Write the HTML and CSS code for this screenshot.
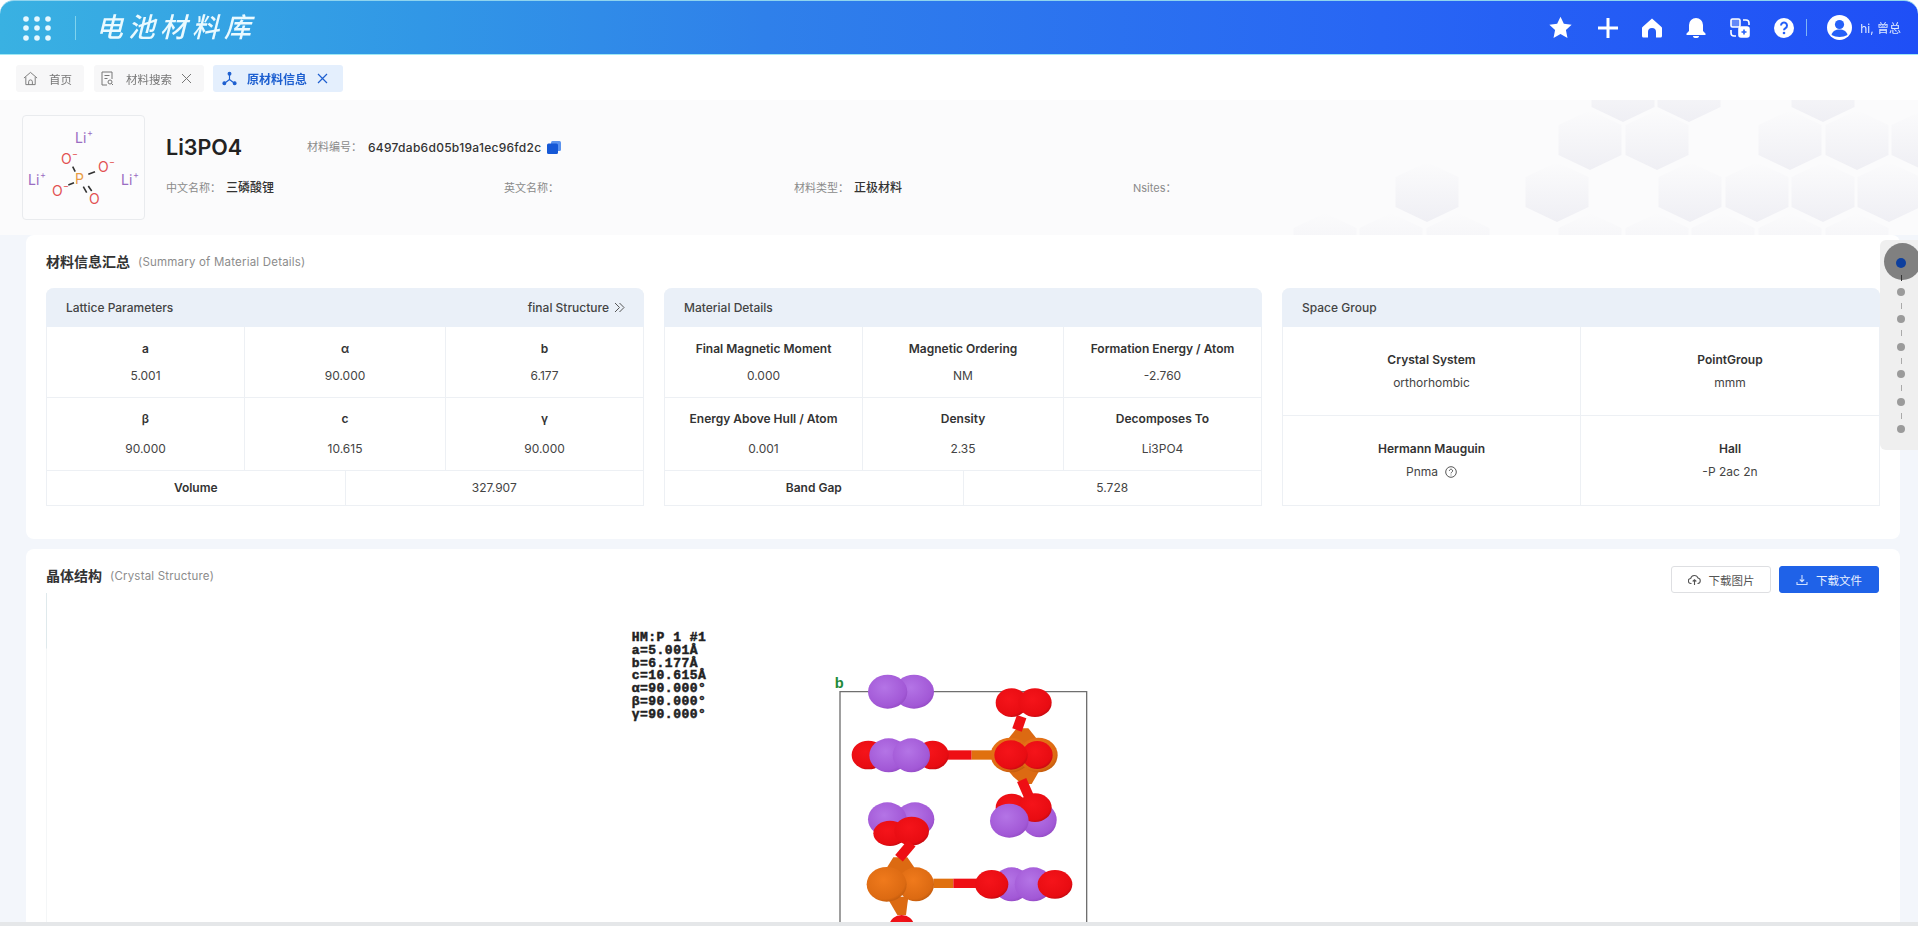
FILE: index.html
```html
<!DOCTYPE html>
<html lang="zh-CN">
<head>
<meta charset="utf-8">
<title>电池材料库</title>
<link rel="stylesheet" href="styles.css">
</head>
<body>
<div class="app">
  <header class="topbar">
    <div class="brand">
      <svg class="grid-icon" width="30" height="26" viewBox="0 0 30 26"><g fill="#e6f8ff"><circle cx="4" cy="4" r="2.800"/><circle cx="15" cy="4" r="2.800"/><circle cx="26" cy="4" r="2.800"/><circle cx="4" cy="13" r="2.800"/><circle cx="15" cy="13" r="2.800"/><circle cx="26" cy="13" r="2.800"/><circle cx="4" cy="23" r="2.800"/><circle cx="15" cy="23" r="2.800"/><circle cx="26" cy="23" r="2.800"/></g></svg>
      <span class="brand-rule"></span>
      <span class="brand-name">电池材料库</span>
    </div>
    <div class="tools">
      <svg class="tool tool-star" width="25" height="25" viewBox="0 0 24 24"><path fill="#fff" d="M12 1.600l3.200 6.900 7.500.9-5.500 5.100 1.500 7.500L12 18.200l-6.700 3.800 1.500-7.500L1.300 9.400l7.500-.9z"/></svg>
      <svg class="tool" width="22" height="22" viewBox="0 0 22 22"><path fill="#fff" d="M9.500 1h3v8.500h8.500v3h-8.500V21h-3v-8.500H1v-3h8.500z"/></svg>
      <svg class="tool" width="22" height="22" viewBox="0 0 22 22"><path fill="#fff" d="M11 1.500l9.500 8.500c.4.400.5.800.5 1.300V19a1.500 1.500 0 0 1-1.500 1.500H15v-5.500a4 4 0 0 0-8 0v5.500H2.500A1.500 1.500 0 0 1 1 19v-7.700c0-.5.100-.9.500-1.300z"/></svg>
      <svg class="tool" width="22" height="22" viewBox="0 0 22 22"><path fill="#fff" d="M11 1a7 7 0 0 1 7 7v6l2.500 2.500V18h-19v-1.500L4 14V8a7 7 0 0 1 7-7zM8 19h6a3 2 0 0 1-6 0z"/></svg>
      <svg class="tool" width="22" height="22" viewBox="0 0 22 22" fill="none" stroke="#fff" stroke-width="1.600"><rect x="2" y="2" width="9" height="8" rx="1.500" fill="#fff" fill-opacity=".3"/><path d="M14 3h3a3 3 0 0 1 3 3v2M2 13v3a3 3 0 0 0 3 3h2"/><rect x="10" y="10" width="10" height="10" rx="2" fill="#fff"/><path d="M15 12.500v5M12.500 15h5" stroke="#2560f8"/></svg>
      <svg class="tool tool-last" width="22" height="22" viewBox="0 0 22 22"><circle cx="11" cy="11" r="10" fill="#fff"/><path fill="none" stroke="#2560f8" stroke-width="2" d="M8 8.500a3 3 0 1 1 4.500 2.600c-1 .6-1.500 1.100-1.500 2.200"/><circle cx="11" cy="16" r="1.300" fill="#2560f8"/></svg>
      <span class="tool-rule"></span>
      <svg class="avatar" width="25" height="25" viewBox="0 0 25 25"><circle cx="12.500" cy="12.500" r="12.500" fill="#fff"/><circle cx="12.500" cy="9.500" r="4.600" fill="#2560f8"/><path fill="#2560f8" d="M4.500 20c1-4 4-5.500 8-5.500s7 1.500 8 5.500c-4.500 2.500-11.500 2.500-16 0z"/></svg>
      <span class="hello">hi, 曾总</span>
    </div>
  </header>

  <nav class="tabs">
    <a class="tab tab-home">
      <svg width="15" height="15" viewBox="0 0 16 16" fill="none" stroke="#777" stroke-width="1"><path d="M1 7.500L8 1.500l7 6M3 6.500V14.500h10V6.500M6 14.500v-3a2 2 0 0 1 4 0v3"/></svg>
      <span>首页</span>
    </a>
    <a class="tab tab-search">
      <svg width="13" height="15" viewBox="0 0 13 15" fill="none" stroke="#777" stroke-width="1"><path d="M6 14H1V1h10v7M3.500 4.500h5M3.500 7.500h3"/><circle cx="9" cy="11" r="2"/><path d="M10.500 12.500l1.500 1.500"/></svg>
      <span>材料搜索</span>
      <svg class="close" width="11" height="11" viewBox="0 0 11 11" stroke="#777" stroke-width="1"><path d="M1 1l9 9M10 1l-9 9"/></svg>
    </a>
    <a class="tab tab-active">
      <svg width="15" height="15" viewBox="0 0 16 16" fill="none" stroke="#1d5fd0" stroke-width="1.200"><circle cx="8" cy="3" r="1.500" fill="#1d5fd0"/><circle cx="2.500" cy="13" r="1.500" fill="#1d5fd0"/><circle cx="13.500" cy="13" r="1.500" fill="#1d5fd0"/><path d="M8 4v5M8 9l-4.500 3.500M8 9l4.500 3.500"/></svg>
      <span>原材料信息</span>
      <svg class="close" width="11" height="11" viewBox="0 0 11 11" stroke="#1d5fd0" stroke-width="1.200"><path d="M1 1l9 9M10 1l-9 9"/></svg>
    </a>
  </nav>

  <main class="main">
    <section class="hero">
      <svg class="hexes" width="640" height="135" viewBox="0 0 640 135">
        <defs>
          <linearGradient id="hexfill" x1="0" y1="0" x2="0" y2="1"><stop offset="0" stop-color="#fbfbfc"/><stop offset="1" stop-color="#efeff4"/></linearGradient>
          <polygon id="hx" points="0,-30 31.500,-15 31.500,15 0,30 -31.500,15 -31.500,-15" fill="url(#hexfill)"/>
        </defs>
        <use href="#hx" x="345" y="-8"/><use href="#hx" x="411" y="-8"/><use href="#hx" x="545" y="-8"/>
        <use href="#hx" x="312" y="40"/><use href="#hx" x="379" y="40"/><use href="#hx" x="512" y="40"/><use href="#hx" x="579" y="40"/><use href="#hx" x="645" y="40"/>
        <use href="#hx" x="149" y="92"/><use href="#hx" x="279" y="92"/><use href="#hx" x="412" y="92"/><use href="#hx" x="479" y="92"/><use href="#hx" x="545" y="92"/><use href="#hx" x="611" y="92"/>
        <use href="#hx" x="47" y="143"/><use href="#hx" x="113" y="143"/><use href="#hx" x="180" y="143"/><use href="#hx" x="312" y="143"/><use href="#hx" x="379" y="143"/><use href="#hx" x="445" y="143"/><use href="#hx" x="512" y="143"/><use href="#hx" x="579" y="143"/>
      </svg>
      <div class="thumb">
        <svg width="121" height="103" viewBox="0 0 121 103">
          <g stroke="#333" stroke-width="1.600"><path d="M49.700 50.700l2.500 5M65.300 58.300l6.700-2.600M45.300 69l5.700-2.300M60.300 70.700l3.400 6M65.300 70l3.400 5"/></g>
          <g class="mol-li"><text x="52" y="27">Li</text><text x="5" y="69">Li</text><text x="98" y="69">Li</text></g>
          <g class="mol-sup"><text x="64" y="20">+</text><text x="17" y="62">+</text><text x="110" y="62">+</text></g>
          <g class="mol-o"><text x="38" y="48">O</text><text x="75" y="56">O</text><text x="29" y="80">O</text><text x="66" y="88">O</text></g>
          <g class="mol-minus"><text x="49" y="41">−</text><text x="86" y="49">−</text><text x="40" y="73">−</text></g>
          <text class="mol-p" x="52" y="68">P</text>
        </svg>
      </div>
      <div class="hero-info">
        <div class="hero-top">
          <h1 class="formula">Li3PO4</h1>
          <span class="meta-label">材料编号：</span>
          <span class="hash">6497dab6d05b19a1ec96fd2c</span>
          <svg class="copy" width="14" height="13" viewBox="0 0 14 13"><rect x="4" y="0" width="10" height="10" rx="1.500" fill="#5b93ee"/><rect x="0" y="2.500" width="11" height="10.500" rx="1.500" fill="#1558d6"/></svg>
        </div>
        <div class="hero-meta">
          <div><span class="meta-label">中文名称：</span><span class="meta-value">三磷酸锂</span></div>
          <div><span class="meta-label">英文名称：</span></div>
          <div><span class="meta-label">材料类型：</span><span class="meta-value">正极材料</span></div>
          <div><span class="meta-label">Nsites：</span></div>
        </div>
      </div>
    </section>

    <section class="card summary">
      <div class="card-title"><strong>材料信息汇总</strong><span>(Summary of Material Details)</span></div>
      <div class="panels">
        <div class="panel">
          <div class="panel-head"><span>Lattice Parameters</span><span class="panel-link">final Structure
            <svg width="11" height="11" viewBox="0 0 11 11" fill="none" stroke="#555" stroke-width="1"><path d="M1 1l4.500 4.500L1 10M5.500 1L10 5.500 5.500 10"/></svg></span></div>
          <div class="sheet">
            <div class="cell third"><b>a</b><span>5.001</span></div>
            <div class="cell third"><b>α</b><span>90.000</span></div>
            <div class="cell third end"><b>b</b><span>6.177</span></div>
            <div class="cell third tall"><b>β</b><span>90.000</span></div>
            <div class="cell third tall"><b>c</b><span>10.615</span></div>
            <div class="cell third tall end"><b>γ</b><span>90.000</span></div>
            <div class="cell half"><b>Volume</b></div>
            <div class="cell half end"><span>327.907</span></div>
          </div>
        </div>
        <div class="panel">
          <div class="panel-head"><span>Material Details</span></div>
          <div class="sheet">
            <div class="cell third"><b>Final Magnetic Moment</b><span>0.000</span></div>
            <div class="cell third"><b>Magnetic Ordering</b><span>NM</span></div>
            <div class="cell third end"><b>Formation Energy / Atom</b><span>-2.760</span></div>
            <div class="cell third tall"><b>Energy Above Hull / Atom</b><span>0.001</span></div>
            <div class="cell third tall"><b>Density</b><span>2.35</span></div>
            <div class="cell third tall end"><b>Decomposes To</b><span>Li3PO4</span></div>
            <div class="cell half"><b>Band Gap</b></div>
            <div class="cell half end"><span>5.728</span></div>
          </div>
        </div>
        <div class="panel">
          <div class="panel-head"><span>Space Group</span></div>
          <div class="sheet sheet-two">
            <div class="cell wide"><b>Crystal System</b><span>orthorhombic</span></div>
            <div class="cell wide end"><b>PointGroup</b><span>mmm</span></div>
            <div class="cell wide last"><b>Hermann Mauguin</b><span class="with-icon">Pnma
              <svg width="12" height="12" viewBox="0 0 12 12" fill="none" stroke="#444" stroke-width=".9"><circle cx="6" cy="6" r="5.300"/><path d="M4.400 4.800a1.600 1.600 0 1 1 2.400 1.400c-.5.300-.8.600-.8 1.200M6 8.600v.8"/></svg></span></div>
            <div class="cell wide end last"><b>Hall</b><span>-P 2ac 2n</span></div>
          </div>
        </div>
      </div>
    </section>

    <section class="card crystal">
      <div class="crystal-head">
        <div class="card-title crystal-title"><strong>晶体结构</strong><span>(Crystal Structure)</span></div>
        <div class="actions">
          <button class="btn btn-plain" type="button">
            <svg width="13" height="12" viewBox="0 0 13 12" fill="none" stroke="#555" stroke-width="1.100"><path d="M3.500 9.500H3a2.500 2.500 0 0 1-.3-5A3.800 3.800 0 0 1 10 4a2.800 2.800 0 0 1 0 5.500h-.5M6.500 11V6M4.700 7.500l1.800-1.800 1.800 1.800"/></svg>
            下载图片</button>
          <button class="btn btn-primary" type="button">
            <svg width="12" height="12" viewBox="0 0 12 12" fill="none" stroke="#cfe0ff" stroke-width="1.100"><path d="M6 1v6.500M3.800 5.500L6 7.700l2.200-2.200M1 8v2.500h10V8"/></svg>
            下载文件</button>
        </div>
      </div>
      <div class="canvas">
        <span class="canvas-rule"></span>
        <svg class="structure" width="520" height="306" viewBox="0 0 1560 918">
          <defs>
            <radialGradient id="li" cx=".42" cy=".38" r=".68"><stop offset="0" stop-color="#b474e6"/><stop offset=".8" stop-color="#a258d6"/><stop offset="1" stop-color="#9048c0"/></radialGradient>
            <radialGradient id="ox" cx=".42" cy=".38" r=".68"><stop offset="0" stop-color="#f5141a"/><stop offset=".8" stop-color="#e80c12"/><stop offset="1" stop-color="#b80a10"/></radialGradient>
            <radialGradient id="ph" cx=".42" cy=".38" r=".68"><stop offset="0" stop-color="#f07a1c"/><stop offset=".8" stop-color="#dc6a12"/><stop offset="1" stop-color="#b8560c"/></radialGradient>
          </defs>
          <g class="jmol">
            <text x="95" y="62">HM:P 1 #1</text><text x="95" y="101">a=5.001Å</text><text x="95" y="140">b=6.177Å</text><text x="95" y="178">c=10.615Å</text><text x="95" y="216">α=90.000°</text><text x="95" y="254">β=90.000°</text><text x="95" y="293">γ=90.000°</text>
          </g>
          <text class="axis" x="704" y="204">b</text>
          <path d="M720 930V215H1460V930" fill="none" stroke="#6f6f6f" stroke-width="4"/>
          <polygon points="1250,325 1285,325 1345,400 1190,400" fill="#dc6a12"/>
          <polygon points="1215,440 1325,440 1295,492 1265,492 1240,470" fill="#dc6a12"/>
          <polygon points="880,712 922,712 962,770 850,760" fill="#dc6a12"/>
          <polygon points="860,830 925,830 918,885 892,885" fill="#dc6a12"/>
          <g fill="none">
            <path d="M1265 290l-14 40" stroke="#ee0f14" stroke-width="30"/>
            <path d="M1040 405h75" stroke="#ee0f14" stroke-width="28"/>
            <path d="M1115 405h70" stroke="#e0700f" stroke-width="28"/>
            <path d="M1265 480l22 50" stroke="#ee0f14" stroke-width="30"/>
            <path d="M1000 790h60" stroke="#e0700f" stroke-width="28"/>
            <path d="M1060 790h70" stroke="#ee0f14" stroke-width="28"/>
          </g>
          <ellipse cx="942" cy="215" rx="60" ry="51" fill="url(#li)"/><ellipse cx="863" cy="215" rx="59" ry="51" fill="url(#li)"/>
          <ellipse cx="1235" cy="248" rx="48" ry="43" fill="url(#ox)"/><ellipse cx="1305" cy="248" rx="50" ry="43" fill="url(#ox)"/>
          <ellipse cx="805" cy="405" rx="50" ry="43" fill="url(#ox)"/><ellipse cx="998" cy="405" rx="48" ry="43" fill="url(#ox)"/>
          <ellipse cx="866" cy="406" rx="58" ry="51" fill="url(#li)"/><ellipse cx="934" cy="406" rx="56" ry="51" fill="url(#li)"/>
          <ellipse cx="1232" cy="405" rx="60" ry="52" fill="url(#ph)"/><ellipse cx="1315" cy="405" rx="58" ry="52" fill="url(#ph)"/>
          <ellipse cx="1312" cy="405" rx="46" ry="42" fill="url(#ox)"/><ellipse cx="1233" cy="405" rx="50" ry="44" fill="url(#ox)"/>
          <ellipse cx="1318" cy="600" rx="52" ry="52" fill="url(#li)"/>
          <ellipse cx="1235" cy="563" rx="48" ry="42" fill="url(#ox)"/><ellipse cx="1305" cy="563" rx="50" ry="43" fill="url(#ox)"/>
          <ellipse cx="1228" cy="602" rx="58" ry="51" fill="url(#li)"/>
          <ellipse cx="945" cy="598" rx="58" ry="51" fill="url(#li)"/><ellipse cx="862" cy="598" rx="58" ry="51" fill="url(#li)"/>
          <ellipse cx="870" cy="640" rx="50" ry="38" fill="url(#ox)"/><ellipse cx="935" cy="633" rx="52" ry="43" fill="url(#ox)"/>
          <path d="M935 670l-38 45" fill="none" stroke="#ee0f14" stroke-width="30"/>
          <ellipse cx="948" cy="793" rx="54" ry="51" fill="url(#ph)"/><ellipse cx="860" cy="793" rx="60" ry="52" fill="url(#ph)"/>
          <ellipse cx="1235" cy="793" rx="55" ry="51" fill="url(#li)"/><ellipse cx="1300" cy="793" rx="56" ry="51" fill="url(#li)"/>
          <ellipse cx="1175" cy="793" rx="50" ry="43" fill="url(#ox)"/><ellipse cx="1365" cy="793" rx="52" ry="43" fill="url(#ox)"/>
          <ellipse cx="905" cy="915" rx="36" ry="30" fill="url(#ox)"/>
        </svg>
      </div>
    </section>
  </main>
  <div class="window-edge"></div>

  <aside class="scrollnav">
    <span class="nav-dot nav-current"></span><span class="nav-dash nav-dash-dark"></span>
    <span class="nav-dot"></span><span class="nav-dash"></span>
    <span class="nav-dot"></span><span class="nav-dash"></span>
    <span class="nav-dot"></span><span class="nav-dash"></span>
    <span class="nav-dot"></span><span class="nav-dash"></span>
    <span class="nav-dot"></span><span class="nav-dash"></span>
    <span class="nav-dot"></span>
  </aside>
</div>
</body>
</html>
```

FILE: styles.css
```css
* { box-sizing: border-box; }
html, body { margin: 0; height: 100%; }
body {
  background: #fff;
  color: #333;
  font-family: Inter, "Noto Sans CJK SC", "Liberation Sans", sans-serif;
  overflow: hidden;
}
.app {
  position: relative;
  height: 926px;
  display: flex;
  flex-direction: column;
  overflow: hidden;
  filter: blur(.35px);
}

/* top bar */
.topbar {
  height: 55px;
  flex: none;
  display: flex;
  align-items: center;
  justify-content: space-between;
  padding: 0 17px 0 22px;
  border-radius: 14px 14px 0 0;
  border-top: 1px solid #8fd4ee;
  border-bottom: 1px solid #9fe8f4;
  background: linear-gradient(90deg, #39b1e2 0%, #3197e6 22%, #2f80ea 40%, #2866f4 72%, #1f4ff6 100%);
}
.brand { display: flex; align-items: center; }
.brand-rule { width: 1px; height: 24px; margin: 0 20px 0 23px; background: #7fd3ee; }
.brand-name {
  color: #eafaff;
  font-size: 27px;
  line-height: 32px;
  letter-spacing: 5px;
  font-style: italic;
  font-weight: 500;
  white-space: nowrap;
}
.tools { display: flex; align-items: center; }
.tool { margin-right: 22px; display: block; }
.tool-star { margin-right: 24px; }
.tool-last { margin-right: 11px; }
.tool-rule { width: 1px; height: 17px; margin: 0 20px 0 0; background: #7fb4f5; }
.avatar { display: block; margin-right: 8px; }
.hello { color: #dfeaff; font-size: 12px; white-space: nowrap; }

/* tabs */
.tabs {
  flex: none;
  height: 45px;
  display: flex;
  padding: 10px 0 8px 16px;
  background: #fff;
}
.tab {
  display: flex;
  align-items: center;
  height: 27px;
  border-radius: 3px;
  background: #f7f7f8;
  color: #777;
  font-size: 11.500px;
  white-space: nowrap;
}
.tab-home { width: 68px; padding-left: 7px; gap: 11px; margin-right: 10px; }
.tab-search { width: 110px; padding-left: 7px; gap: 12px; margin-right: 9px; }
.tab-active { width: 130px; padding-left: 9px; gap: 10px; background: #e4effd; color: #1d5fd0; font-weight: 700; font-size: 12px; }
.close { margin-left: -3px; }
.tab-active .close { margin-left: 0; }

/* main */
.main {
  flex: 1;
  min-height: 0;
  display: flex;
  flex-direction: column;
  background: #f3f6fb;
}
.hero {
  position: relative;
  flex: none;
  height: 135px;
  display: flex;
  gap: 21px;
  padding: 15px 0 0 22px;
  background: #fbfbfc;
  overflow: hidden;
}
.hexes { position: absolute; right: 0; top: 0; }
.thumb {
  position: relative;
  width: 123px;
  height: 105px;
  border: 1px solid #e9ebee;
  border-radius: 4px;
  background: #fcfcfd;
}
.thumb svg { display: block; }
.mol-li text { font-size: 14px; fill: #9a6cc2; }
.mol-sup text { font-size: 9px; fill: #9a6cc2; }
.mol-o text { font-size: 14px; fill: #e25252; }
.mol-minus text { font-size: 9px; fill: #e25252; }
.mol-p { font-size: 14px; fill: #e89a42; }
.hero-info { position: relative; margin-top: 18px; }
.hero-top { display: flex; align-items: center; height: 28px; }
.formula { width: 141px; margin: 0; font-size: 21.500px; font-weight: 600; line-height: 28px; color: #222; }
.meta-label { color: #8a8a8a; font-size: 11px; line-height: 16px; white-space: nowrap; }
.hash { margin-left: 6px; color: #333; font-size: 12px; font-weight: 500; letter-spacing: .28px; }
.copy { margin-left: 6px; display: block; }
.hero-meta {
  display: grid;
  grid-template-columns: 338px 290px 339px 200px;
  margin-top: 17px;
  line-height: 16px;
}
.meta-value { margin-left: 5px; color: #333; font-size: 12px; font-weight: 500; }

/* cards */
.card {
  margin: 0 18px 0 26px;
  background: #fff;
  border-radius: 8px;
  padding: 0 20px;
}
.summary { flex: none; height: 304px; }
.card-title { display: flex; align-items: center; height: 53px; gap: 8px; }
.card-title strong { font-size: 14px; font-weight: 700; color: #333; line-height: 20px; }
.card-title span { font-size: 11.500px; color: #8c8c8c; letter-spacing: .2px; line-height: 20px; }
.panels { display: grid; grid-template-columns: repeat(3, 1fr); gap: 20px; }
.panel { border: 1px solid #edf0f4; border-top: 0; border-radius: 8px 8px 0 0; height: 218px; display: flex; flex-direction: column; }
.panel-head {
  flex: none;
  height: 39px;
  margin: 0 -1px;
  display: flex;
  align-items: center;
  justify-content: space-between;
  padding: 0 20px;
  background: #eaf0f8;
  border-radius: 8px 8px 0 0;
  font-size: 12px;
  font-weight: 500;
  color: #444;
}
.panel-link { display: flex; align-items: center; gap: 5px; margin-right: -1px; white-space: nowrap; }
.sheet {
  flex: 1;
  display: grid;
  grid-template-columns: 99px 99px 100.500px 100.500px 1fr 1fr;
  grid-template-rows: 71px 73px 1fr;
  font-size: 12px;
}
.sheet-two { grid-template-columns: repeat(6, 1fr); grid-template-rows: 89px 1fr; }
.cell {
  display: flex;
  flex-direction: column;
  align-items: center;
  justify-content: center;
  gap: 13px;
  border-right: 1px solid #edf0f4;
  border-bottom: 1px solid #edf0f4;
  color: #444;
  line-height: 14px;
  white-space: nowrap;
}
.cell b { font-weight: 600; color: #333; }
.third { grid-column: span 2; }
.half { grid-column: span 3; border-bottom: 0; }
.wide { grid-column: span 3; gap: 9px; }
.tall { gap: 16px; }
.end { border-right: 0; }
.last { border-bottom: 0; }
.with-icon { display: flex; align-items: center; gap: 7px; }

/* crystal card */
.crystal {
  flex: 1;
  min-height: 0;
  margin-top: 10px;
  display: flex;
  flex-direction: column;
  border-radius: 8px 8px 0 0;
  overflow: hidden;
}
.crystal-head { flex: none; height: 44px; padding-top: 17px; display: flex; justify-content: space-between; align-items: flex-start; }
.crystal-title { height: 20px; }
.actions { display: flex; gap: 8px; margin-right: 1px; }
.btn {
  width: 100px;
  height: 27px;
  display: flex;
  align-items: center;
  justify-content: center;
  gap: 8px;
  border-radius: 3px;
  font: inherit;
  font-size: 11.500px;
  padding: 0;
}
.btn-plain { background: #fff; border: 1px solid #dedfe2; color: #555; }
.btn-primary { background: #1f62e8; border: 1px solid #1f62e8; color: #e8f0ff; }
.canvas { position: relative; flex: 1; min-height: 0; }
.canvas-rule { position: absolute; left: 0; top: 0; bottom: 0; width: 1px; background: linear-gradient(#dfe9ec 0, #dfe9ec 55px, #f4f6f7 56px, #f4f6f7 100%); }
.structure { position: absolute; left: 554px; top: 27px; display: block; }
.jmol text { font-family: "Liberation Mono", monospace; font-weight: 700; font-size: 39px; letter-spacing: 1.500px; fill: #222; stroke: #222; stroke-width: 1.500px; }
.axis { font-family: "Liberation Sans", sans-serif; font-size: 44px; font-weight: 700; fill: #1f8a3a; }
.window-edge { flex: none; height: 4px; background: #e5e7e9; }

/* floating section nav */
.scrollnav {
  position: absolute;
  left: 1880px;
  top: 240px;
  width: 38px;
  height: 210px;
  padding: 18px 20px 0 0;
  display: flex;
  flex-direction: column;
  align-items: flex-end;
  background: #efefef;
  border-radius: 6px 0 0 6px;
}
.nav-dot { position: relative; width: 8px; height: 8px; margin-right: -7px; border-radius: 50%; background: #9b9b9b; flex: none; }
.nav-dash { position: relative; z-index: 1; width: 1px; height: 6px; margin: 7px -3.500px 6.500px 0; background: #aaa; flex: none; }
.nav-dash-dark { background: #333; }
.nav-current { width: 10px; height: 10px; margin-right: -8px; background: transparent; }
.nav-current::before {
  content: "";
  position: absolute;
  left: -12px;
  top: -15px;
  width: 37px;
  height: 37px;
  border-radius: 50%;
  background: #808080;
}
.nav-current::after {
  content: "";
  position: absolute;
  inset: 0;
  border-radius: 50%;
  background: #0d3f9e;
}
```
